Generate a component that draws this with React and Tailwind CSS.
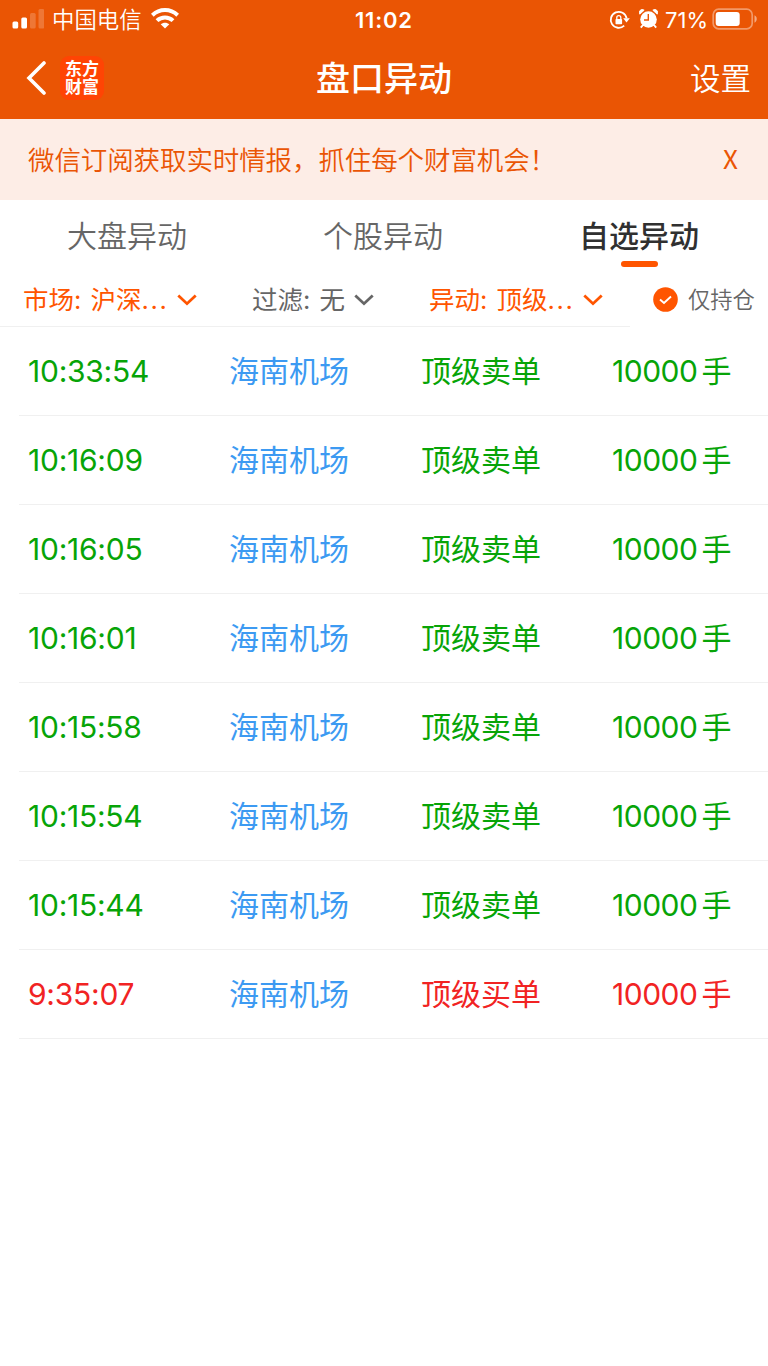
import React from "react";

const rows = [
  { time: "10:33:54", type: "顶级卖单", sell: true },
  { time: "10:16:09", type: "顶级卖单", sell: true },
  { time: "10:16:05", type: "顶级卖单", sell: true },
  { time: "10:16:01", type: "顶级卖单", sell: true },
  { time: "10:15:58", type: "顶级卖单", sell: true },
  { time: "10:15:54", type: "顶级卖单", sell: true },
  { time: "10:15:44", type: "顶级卖单", sell: true },
  { time: "9:35:07", type: "顶级买单", sell: false },
];

function Chevron() {
  return (
    <svg width="20" height="12" viewBox="0 0 20 12" fill="none" stroke="currentColor" strokeWidth="2.8">
      <path d="M1.3 1.5 L10 9.7 L18.7 1.5" />
    </svg>
  );
}

function StatusBar() {
  return (
    <div className="flex h-10 items-center text-[22px] leading-none">
      <div className="flex w-[355px] items-center pl-3">
        <svg className="-mt-[2px]" width="32" height="20" viewBox="0 0 32 20" fill="white">
          <rect x="0.5" y="12.5" width="5.7" height="7" rx="1.5" />
          <rect x="9.3" y="8.5" width="5.7" height="11" rx="1.5" />
          <rect x="18" y="4" width="5.7" height="15.5" rx="1.5" opacity="0.2" />
          <rect x="26.5" y="0" width="5.7" height="19.5" rx="1.5" opacity="0.2" />
        </svg>
        <span className="ml-2 text-[22.4px] font-[350]">中国电信</span>
        <svg className="-mt-[3px] ml-[9px]" width="28" height="21" viewBox="0 0 28 21" fill="none" stroke="white" strokeWidth="4">
          <path d="M1.3 7.2 C8.5 0.3 19.5 0.3 26.7 7.2" />
          <path d="M6 12.6 C10.5 8.3 17.5 8.3 22 12.6" />
          <path d="M14 20.5 L9.7 16.3 C12 14.1 16 14.1 18.3 16.3 Z" fill="white" stroke="none" />
        </svg>
      </div>
      <div className="w-[254px] font-semibold tracking-[0.8px]">11:02</div>
      <svg width="22" height="20" viewBox="0 0 22 20" fill="none" stroke="white" strokeWidth="1.8">
        <path d="M15.2 15.7 A8 8 0 1 1 17.6 8.2" />
        <path d="M14.2 8.2 H20.8 L17.5 12.5 Z" fill="white" stroke="none" />
        <rect x="6.5" y="9" width="6.6" height="5.2" rx="0.8" fill="white" stroke="none" />
        <path d="M7.8 9.5 V7.6 A2 2 0 0 1 11.8 7.6 V9.5" strokeWidth="1.3" />
      </svg>
      <svg className="-mt-[2px] ml-2" width="19" height="20" viewBox="0 0 19 20">
        <circle cx="9.5" cy="10.5" r="8.3" fill="white" />
        <path d="M0.8 5.2 A3 3 0 0 1 5.2 1.2 Z M18.2 5.2 A3 3 0 0 0 13.8 1.2 Z" fill="white" stroke="white" strokeWidth="0.8" />
        <path d="M4 16 L1.8 18.7 M15 16 L17.2 18.7" stroke="white" strokeWidth="1.9" />
        <path d="M9.3 5 V11 H5" fill="none" stroke="#ea5504" strokeWidth="1.4" />
      </svg>
      <span className="ml-[7px] w-[47px] whitespace-nowrap">71%</span>
      <svg className="-mt-[2px]" width="46" height="22" viewBox="0 0 46 22">
        <rect x="1.2" y="1.2" width="39" height="19.6" rx="5.5" fill="none" stroke="white" strokeOpacity="0.4" strokeWidth="1.7" />
        <rect x="3.7" y="4" width="24" height="14" rx="3" fill="white" />
        <path d="M42.5 7.3 C45.5 8.7 45.5 13.3 42.5 14.7 Z" fill="white" fillOpacity="0.5" />
      </svg>
    </div>
  );
}

function App() {
  return (
    <div className="h-[1366px] w-[768px] overflow-hidden bg-white font-['Inter','Noto_Sans_CJK_SC',sans-serif]">
      {/* Header */}
      <header className="h-[119px] bg-[#ea5504] text-white">
        <StatusBar />
        <div className="flex h-[77px] items-center pl-[26px] pr-[17px]">
          <svg className="-mt-px" width="20" height="34" viewBox="0 0 20 34" fill="none" stroke="white" strokeWidth="3.6">
            <path d="M18 2 L3 17 L18 32" strokeLinecap="round" />
          </svg>
          <div className="-mt-px ml-[14px] flex h-11 w-11 flex-col items-center justify-center rounded-[9px] bg-[#ff4404] text-[17px] font-bold leading-[18px]">
            <span>东方</span>
            <span>财富</span>
          </div>
          <h1 className="ml-[212px] w-[374px] text-[34px] font-medium">盘口异动</h1>
          <span className="whitespace-nowrap pt-px text-[30.5px] font-[350]">设置</span>
        </div>
      </header>

      {/* Subscribe banner */}
      <div className="flex h-[81px] items-center justify-between bg-[#fdede6] pl-7 pr-[30px] pt-[2px] text-[26.5px] text-[#ea5504]">
        <span className="font-[350] tracking-[-0.1px]">微信订阅获取实时情报，抓住每个财富机会！</span>
        <span className="-mt-[6px] font-['Noto_Sans_CJK_SC',sans-serif] text-[26px]">X</span>
      </div>

      {/* Tabs */}
      <nav className="grid h-[73px] grid-cols-3 text-center text-[30px] leading-[73px] text-[#666]">
        <span className="pr-[2px] font-[350]">大盘异动</span>
        <span className="pr-[2px] font-[350]">个股异动</span>
        <div className="relative pr-[2px] font-medium text-[#303030]">
          自选异动
          <span className="absolute bottom-[6px] left-[109px] h-[6px] w-[37px] rounded-full bg-[#ff5500]" />
        </div>
      </nav>

      {/* Filters */}
      <div className="relative flex h-[54px] items-center whitespace-nowrap text-[25.5px] text-[#666]">
        <div className="flex w-[229px] items-center pl-[23px] text-[#ff5500]">
          <span className="w-[154px]">
            市场: <span className="ml-[2px]">沪深</span>
            <span className="tracking-[1.6px]">...</span>
          </span>
          <Chevron />
        </div>
        <div className="flex w-[177px] items-center pl-[23px]">
          <span className="w-[102px]">
            过滤: <span className="ml-[2px]">无</span>
          </span>
          <Chevron />
        </div>
        <div className="flex w-[224px] items-center pl-[23px] text-[#ff5500]">
          <span className="w-[154px]">
            异动: <span className="ml-[2px]">顶级</span>
            <span className="tracking-[1.6px]">...</span>
          </span>
          <Chevron />
        </div>
        <div className="flex items-center pl-[23px]">
          <svg className="-mt-[2px]" width="25" height="25" viewBox="0 0 25 25" fill="none">
            <circle cx="12.5" cy="12.5" r="12.3" fill="#ff5500" />
            <path d="M7 12.5 L11 16 L18 9.5" stroke="white" strokeWidth="1.9" />
          </svg>
          <span className="ml-[10px] text-[22.3px] font-[350]">仅持仓</span>
        </div>
        <span className="absolute bottom-0 left-0 h-px w-[630px] bg-[#f0f0f0]" />
      </div>

      {/* Alerts */}
      <ul className="pl-[19px] text-[30px]">
        {rows.map((row) => (
          <li
            key={row.time}
            className={`flex h-[89px] items-center whitespace-nowrap border-b border-[#f0f0f0] pl-[9px] ${row.sell ? "text-[#07a407]" : "text-[#f12323]"}`}
          >
            <span className="w-[201px] tracking-[-0.25px]">{row.time}</span>
            <span className="w-[192px] text-[#3c9af2]">海南机场</span>
            <span className="w-[191px]">{row.type}</span>
            <span className="tracking-[-0.5px]">10000</span>
            <span className="ml-1">手</span>
          </li>
        ))}
      </ul>
    </div>
  );
}

export default App;
